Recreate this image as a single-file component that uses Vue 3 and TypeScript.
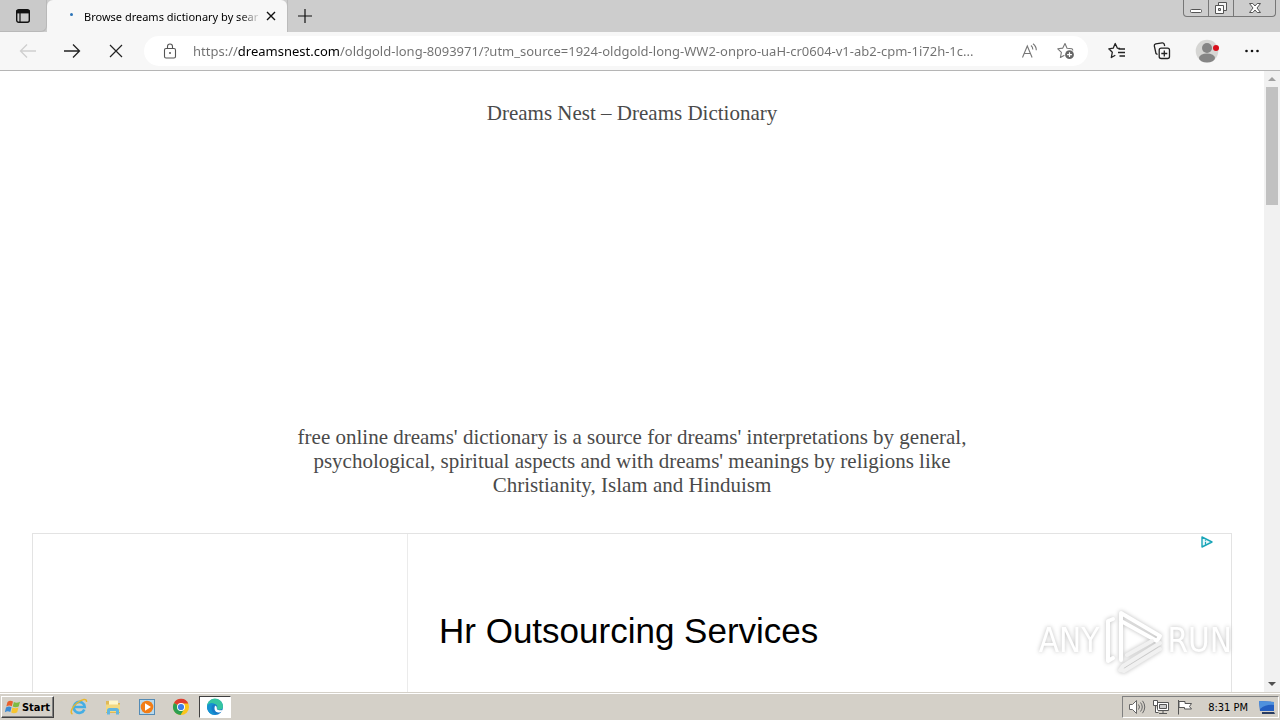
<script setup lang="ts">
import { ref } from 'vue'

const address = ref('https://dreamsnest.com/oldgold-long-8093971/?utm_source=1924-oldgold-long-WW2-onpro-uaH-cr0604-v1-ab2-cpm-1i72h-1c...')
const tabTitle = 'Browse dreams dictionary by sear'
const clock = '8:31 PM'
</script>

<template>
  <div class="desktop">
    <header class="tab-strip">
      <button class="tab-actions" aria-label="Tab actions menu">
        <svg width="16" height="16" viewBox="0 0 16 16"><rect x="1.7" y="1.7" width="12.6" height="12.6" rx="2" fill="none" stroke="#111" stroke-width="1.4" /><path d="M1.5 2h13v3.4h-13z" fill="#111" /><path d="M5 5v9" stroke="#111" stroke-width="1.2" /></svg>
      </button>
      <div class="tab">
        <span class="spinner"></span>
        <span class="tab-title">{{ tabTitle }}</span>
        <button class="tab-close" aria-label="Close tab">
          <svg width="10" height="10" viewBox="0 0 10 10"><path d="M1 1l8 8M9 1l-8 8" stroke="#111" stroke-width="1.4" /></svg>
        </button>
      </div>
      <button class="new-tab" aria-label="New tab">
        <svg width="14" height="14" viewBox="0 0 14 14"><path d="M7 0v14M0 7h14" stroke="#111" stroke-width="1.2" /></svg>
      </button>
      <div class="window-buttons">
        <button class="win" aria-label="Minimize">
          <svg width="14" height="14" viewBox="0 0 14 14"><rect x="1.5" y="8.5" width="11" height="3" rx="1" fill="#fff" stroke="#555" /></svg>
        </button>
        <button class="win" aria-label="Restore">
          <svg width="14" height="14" viewBox="0 0 14 14"><path d="M4.500 1.500h8v8h-8z" fill="#f4f4f4" stroke="#555" /><path d="M1.500 4.500h8v8h-8z" fill="#fff" stroke="#555" /><path d="M4.500 7.500h2v2h-2z" fill="#ccc" stroke="#555" /></svg>
        </button>
        <button class="win win-close" aria-label="Close">
          <svg width="14" height="12" viewBox="0 0 14 12"><path d="M1.500 1.500h3.300L7 4l2.200-2.500h3.300L9 6l3.500 4.500H9.200L7 8l-2.200 2.500H1.500L5 6z" fill="#fff" stroke="#555" /></svg>
        </button>
      </div>
    </header>

    <nav class="toolbar">
      <button class="nav-btn" aria-label="Back" disabled>
        <svg width="18" height="16" viewBox="0 0 18 16"><path d="M17 8H1.500M8 1.500L1.500 8L8 14.500" fill="none" stroke="#cfcfcf" stroke-width="1.3" /></svg>
      </button>
      <button class="nav-btn" aria-label="Forward">
        <svg width="18" height="16" viewBox="0 0 18 16"><path d="M1 8h15.500M10 1.500L16.500 8L10 14.500" fill="none" stroke="#222" stroke-width="1.3" /></svg>
      </button>
      <button class="nav-btn" aria-label="Stop loading">
        <svg width="14" height="14" viewBox="0 0 14 14"><path d="M1 1l12 12M13 1L1 13" stroke="#222" stroke-width="1.2" /></svg>
      </button>
      <div class="address-bar">
        <button class="in-btn" aria-label="Site information">
          <svg width="14" height="16" viewBox="0 0 14 16"><rect x="1.500" y="5.500" width="11" height="9.500" rx="1.500" fill="none" stroke="#555" stroke-width="1.100" /><path d="M4.500 5.500V3.500a2.500 2.500 0 0 1 5 0v2" fill="none" stroke="#555" stroke-width="1.100" /><circle cx="7" cy="10" r="1" fill="#555" /></svg>
        </button>
        <input v-model="address" class="address" type="text" aria-label="Address and search bar" spellcheck="false" />
        <button class="in-btn" aria-label="Read aloud">
          <svg width="18" height="18" viewBox="0 0 18 18"><path d="M1.500 15.500L6.300 4l4.800 11.500M3.300 11.500h6M10 3.500a5 5 0 0 1 1.800 4M12 1.700a8 8 0 0 1 3.300 6.500" fill="none" stroke="#777" stroke-width="1.100" /></svg>
        </button>
        <button class="in-btn" aria-label="Add to favorites">
          <svg width="18" height="18" viewBox="0 0 18 18"><path d="M16 8.500l-1-1.700-5-.6L8 1.500 5.800 6.100.8 6.800l3.600 3.500-1 5.200 4-2.200" fill="none" stroke="#777" stroke-width="1.100" stroke-linejoin="round" /><circle cx="12.500" cy="12.700" r="4.400" fill="#666" /><path d="M12.500 10.300v4.800M10.100 12.700h4.800" stroke="#fff" stroke-width="1.200" /></svg>
        </button>
      </div>
      <div class="tools">
        <button class="tool" aria-label="Favorites">
          <svg width="18" height="18" viewBox="0 0 18 18"><path d="M12 6.500L9.400 6.200 7.200 1.500 5.200 6.200.8 6.800l3.500 3.500-1 5.200 4-2.300M10.500 7h6.500M10 10.500h7M11.500 14h5.500" fill="none" stroke="#222" stroke-width="1.300" stroke-linejoin="round" /></svg>
        </button>
        <button class="tool" aria-label="Collections">
          <svg width="18" height="18" viewBox="0 0 18 18"><rect x="6.200" y="6.200" width="10.300" height="10.300" rx="2" fill="none" stroke="#222" stroke-width="1.300" /><path d="M11.300 8.500v6M8.300 11.500h6M4.500 12.500L3 11.500 1.300 4a2 2 0 0 1 1.400-2.200l6.500-1a2 2 0 0 1 2 1.300l.5 1.900" fill="none" stroke="#222" stroke-width="1.300" /></svg>
        </button>
        <button class="tool" aria-label="Profile">
          <svg width="24" height="24" viewBox="0 0 24 24"><circle cx="12" cy="12" r="11.300" fill="#d6d6d4" /><circle cx="12" cy="9" r="5" fill="#858585" /><ellipse cx="12" cy="19" rx="8" ry="4.500" fill="#858585" /><circle cx="21" cy="9" r="3" fill="#d8101c" /></svg>
        </button>
        <button class="tool" aria-label="Settings and more">
          <svg width="16" height="4" viewBox="0 0 16 4"><circle cx="2.500" cy="2" r="1.300" fill="#111" /><circle cx="8" cy="2" r="1.300" fill="#111" /><circle cx="13.500" cy="2" r="1.300" fill="#111" /></svg>
        </button>
      </div>
    </nav>

    <div class="viewport">
      <main class="page">
        <h1 class="site-title">Dreams Nest – Dreams Dictionary</h1>
        <p class="intro">free online dreams' dictionary is a source for dreams' interpretations by general, psychological, spiritual aspects and with dreams' meanings by religions like Christianity, Islam and Hinduism</p>
        <section class="ad">
          <div class="ad-media"></div>
          <div class="ad-body">
            <h2 class="ad-title">Hr Outsourcing Services</h2>
            <button class="ad-choices" aria-label="AdChoices">
              <svg width="12" height="12" viewBox="0 0 12 12"><path d="M1 1l10 5-10 5z" fill="#e8f8fb" stroke="#1aa5b8" stroke-width="1.400" stroke-linejoin="round" /><path d="M4.500 3.800v1M4.500 5.800v3" stroke="#1aa5b8" stroke-width="1.200" /></svg>
            </button>
          </div>
        </section>
      </main>
      <div class="scrollbar">
        <span class="arrow arrow-up"></span>
        <div class="track"><div class="thumb"></div></div>
        <span class="arrow arrow-down"></span>
      </div>
      <div class="watermark">
        <span>ANY</span>
        <svg width="60" height="66" viewBox="0 0 60 66" fill="none" stroke="#fff" stroke-width="4" stroke-linejoin="round" stroke-linecap="round"><path d="M10 11L5 13v40l5-3" /><path d="M18 52V5l39 23-3 5L18 13" /><path d="M57 35L20 58l-3 4 4 1 36-22M24 47l25-14" stroke="#f1f1f1" /></svg>
        <span>RUN</span>
      </div>
    </div>

    <footer class="taskbar">
      <button class="start">
        <svg width="16" height="16" viewBox="0 0 16 16"><path d="M2.500 3Q5 .8 8 2.600L6.800 7.200Q4 5.800 1.300 7.600z" fill="#e9602c" /><path d="M8.900 3Q11.500 4.600 15 2.700L13.700 7.500Q10.500 9 7.700 7.500z" fill="#7dbb42" /><path d="M1 8.600Q3.800 6.700 6.500 8.200L5.300 13Q2.500 11.500-.2 13.300z" fill="#3c8bd4" /><path d="M7.400 8.600Q10.500 10 13.400 8.500L12.200 13.300Q9 15 6.200 13.500z" fill="#f7c52e" /></svg>
        <span>Start</span>
      </button>
      <div class="launchers">
        <button class="launcher" aria-label="Internet Explorer">
          <svg width="18" height="18" viewBox="0 0 18 18"><path d="M14.300 11.500A5.500 5.500 0 1 1 14.700 9H5" fill="none" stroke="#45aee4" stroke-width="2.700" /><path d="M2.500 16C-.5 15 2 9 7 5S17 0 16.500 4" fill="none" stroke="#e9b72c" stroke-width="1.500" /></svg>
        </button>
        <button class="launcher" aria-label="Windows Explorer">
          <svg width="18" height="18" viewBox="0 0 18 18"><path d="M2 3h5l1 2h8v10H2z" fill="#e0b956" /><path d="M5 2.500h9V8H5z" fill="#fff7ca" /><path d="M2 6.500h14V14H2z" fill="#f3d980" /><path d="M3 16.500v-4q0-2.500 2.500-2.500h7q2.500 0 2.500 2.500v4h-3v-3.500H6v3.500z" fill="#62b6df" /></svg>
        </button>
        <button class="launcher" aria-label="Windows Media Player">
          <svg width="18" height="18" viewBox="0 0 18 18"><rect x="1.500" y="1.500" width="15" height="15" fill="#b8d9ed" stroke="#548bb5" /><circle cx="9" cy="9" r="6.300" fill="#f27d16" /><path d="M7 5.300L13 9l-6 3.700z" fill="#fff" /></svg>
        </button>
        <button class="launcher" aria-label="Google Chrome">
          <svg width="18" height="18" viewBox="0 0 18 18"><circle cx="9" cy="9" r="8" fill="#fbc51b" /><path d="M9 9L2 5A8 8 0 0 1 16.300 5.500H9z" fill="#df3d30" /><path d="M9 9L2 5A8 8 0 0 0 8.500 17L12.500 10.500z" fill="#2c9f51" /><circle cx="9" cy="9" r="4" fill="#fff" /><circle cx="9" cy="9" r="3.100" fill="#3d7ee8" /></svg>
        </button>
        <button class="launcher active" aria-label="Microsoft Edge">
          <svg width="18" height="18" viewBox="0 0 18 18"><circle cx="9" cy="9" r="8" fill="#167bc8" /><path d="M1 9A8 8 0 0 1 17 8q.3 3.500-3.500 3.800-3 0-2.500-1.800 1-3-2-4Q4.500 5 1 9z" fill="#35c5a2" /><path d="M1.500 7Q5 3.500 8.500 6 5 7 5.500 11t5 5.500Q3 18 1 10z" fill="#1593d2" /><path d="M9 7.500q2.500 1 1.800 3 0 2 3.200 1.700h3Q15.500 15 12 14.500 7 13.500 9 7.500z" fill="#fff" /></svg>
        </button>
      </div>
      <div class="tray">
        <svg width="18" height="16" viewBox="0 0 18 16" fill="#fff" stroke="#666"><path d="M1.500 5.500h3l4-4v13l-4-4h-3z" /><path d="M10.500 5.500q2 2.500 0 5M12.500 3.500q3.500 4.500 0 9M14.500 1.800q4.500 6.200 0 12.400" fill="none" /></svg>
        <svg width="18" height="16" viewBox="0 0 18 16" fill="#fff" stroke="#555"><path d="M5.500 3.500h11v8h-11z" /><path d="M7.500 5.500h7v4h-7z" fill="#ccc" /><path d="M7 14.500h8M11 11.500v3M1.500 1.500h4v5h-4zM3.500 6.500v7h3" /></svg>
        <svg width="18" height="16" viewBox="0 0 18 16" fill="#fff" stroke="#555"><path d="M2.500 1v14.500" /><path d="M3 2.500h6v2h6.500l-2 3 2 2.500H8.500V8.500H3z" /></svg>
        <time class="clock">{{ clock }}</time>
        <svg width="18" height="16" viewBox="0 0 18 16"><path d="M1 2l15 1v9H2z" fill="#245fc1" /><path d="M1 2l15 1v3Q8 5 2 10z" fill="#4f91dd" /><path d="M4 13h12l1 2H4z" fill="#273b61" /></svg>
      </div>
    </footer>
  </div>
</template>

<style>
body { margin: 0; }
</style>

<style scoped>
* { box-sizing: border-box; }
button { border: 0; padding: 0; margin: 0; background: none; display: flex; align-items: center; justify-content: center; font: inherit; color: inherit; }
svg { display: block; flex: none; }
.desktop { height: 100vh; display: flex; flex-direction: column; overflow: hidden; background: #fff; font-family: "Noto Sans", "Open Sans", sans-serif; color: #000; }
.tab-strip { flex: none; height: 32px; display: flex; background: #cdcdcd; }
.tab-actions { width: 47px; border-right: 1px solid #b9b9b9; border-bottom: 1px solid #b9b9b9; border-radius: 0 0 6px 0; background: #cacaca; }
.tab { width: 240px; display: flex; align-items: center; padding: 0 10px 0 23px; background: #f7f7f7; border-radius: 6px 6px 0 0; }
.spinner { width: 3px; height: 3px; margin: 0 11px 4px 0; border-radius: 50%; background: #2b74b8; }
.tab-title { flex: 1; overflow: hidden; white-space: nowrap; font-size: 11px; mask-image: linear-gradient(90deg, #000 88%, transparent); }
.tab-close { width: 12px; height: 20px; margin-left: 4px; }
.new-tab { width: 34px; border-left: 1px solid #bbb; }
.window-buttons { display: flex; height: 17px; margin: 0 4px 0 auto; border: 1px solid #777; border-top: 0; border-radius: 0 0 4px 4px; }
.win { width: 25px; border-right: 1px solid #777; }
.win-close { width: 41px; border-right: 0; }
.toolbar { flex: none; height: 39px; display: flex; align-items: center; padding: 0 6px; background: #f7f7f7; border-bottom: 1px solid #b5b5b5; }
.nav-btn { width: 44px; height: 32px; }
.address-bar { flex: 1; height: 30px; display: flex; align-items: center; margin-left: 6px; padding: 0 4px 0 8px; border-radius: 15px; background: #fff; }
.in-btn { width: 36px; height: 28px; }
.address { flex: 1; min-width: 0; height: 28px; margin-left: 5px; padding: 0; border: 0; outline: 0; font-family: "Noto Sans", "Open Sans", sans-serif; font-size: 13px; color: transparent; background: linear-gradient(90deg, #707070 45px, #000 45px, #000 147px, #707070 147px); background-clip: text; text-overflow: ellipsis; }
.tools { display: flex; margin-left: 6px; }
.tool { width: 45px; height: 32px; }
.viewport { position: relative; flex: 1; min-height: 0; display: flex; overflow: hidden; }
.page { flex: 1; display: flex; flex-direction: column; padding: 30px 32px 0; }
.site-title, .intro { font-family: "Liberation Serif", "DejaVu Serif", serif; font-size: 21px; line-height: 24px; font-weight: 400; color: #4a4a4a; text-align: center; }
.site-title { margin: 0 0 300px; }
.intro { max-width: 700px; margin: 0 auto 36px; }
.ad { flex: 1; display: flex; border: 1px solid #e3e3e3; border-bottom: 0; }
.ad-media { width: 375px; border-right: 1px solid #ebebeb; }
.ad-body { flex: 1; display: flex; justify-content: space-between; align-items: flex-start; padding: 2px 18px 0 31px; }
.ad-title { margin: 74px 0 0; font: 400 35px/42px "Liberation Sans", Arial, sans-serif; }
.scrollbar { width: 16px; display: flex; flex-direction: column; align-items: center; background: #f1f1f1; }
.arrow { width: 0; height: 0; margin: 6px 0; border: 4px solid transparent; }
.arrow-up { border-top: 0; border-bottom-color: #a0a0a0; }
.arrow-down { border-bottom: 0; border-top-color: #505050; }
.track { flex: 1; width: 12px; }
.thumb { height: 20%; background: #c1c1c1; }
.watermark { position: absolute; right: 48px; bottom: 18px; display: flex; align-items: center; gap: 4px; font: 400 33px/40px "DejaVu Sans Condensed", sans-serif; color: #fff; filter: drop-shadow(0 0 2px #bbb); pointer-events: none; }
.taskbar { flex: none; height: 28px; display: flex; align-items: center; padding: 1px 1px 0; background: #d4d0c8; border-top: 1px solid #d4d0c8; box-shadow: inset 0 1px #fff; font-family: "DejaVu Sans Condensed", "DejaVu Sans", sans-serif; font-size: 11px; }
.start { width: 53px; height: 22px; gap: 1px; border: 1px solid; border-color: #fff #404040 #404040 #fff; box-shadow: inset -1px -1px #808080; font-weight: 700; }
.launchers { display: flex; margin-left: 8px; }
.launcher { width: 34px; height: 22px; }
.launcher.active { width: 32px; background: #fff; border: 1px solid; border-color: #404040 #fff #fff #404040; margin-left: 1px; }
.tray { display: flex; align-items: center; gap: 6px; height: 22px; margin-left: auto; padding: 0 2px 0 5px; border: 1px solid; border-color: #808080 #fff #fff #808080; }
.clock { margin: 0 4px 0 8px; }
</style>
